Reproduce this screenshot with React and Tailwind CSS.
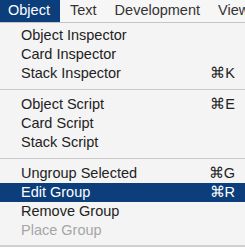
function Item({ label, shortcut, active, disabled }) {
  return (
    <div
      className={`flex h-[19px] items-center justify-between pl-[21px] pr-[10px] text-[14.5px] ${
        active ? 'bg-[#0b3e7b] text-white' : disabled ? 'text-[#a6a6a6]' : 'text-[#222222]'
      }`}
    >
      <span>{label}</span>
      {shortcut && <span>{shortcut}</span>}
    </div>
  )
}

function Separator() {
  return (
    <div className="flex h-[12px] items-center">
      <div className="h-px w-full bg-[#c9c9c9]" />
    </div>
  )
}

export default function App() {
  return (
    <div className="flex h-[249px] w-[245px] flex-col overflow-hidden bg-white font-['Liberation_Sans',Arial,sans-serif]">
      {/* menu bar */}
      <div className="flex h-[22px] shrink-0 items-center overflow-hidden whitespace-nowrap bg-[#f6f6f6] text-[14.5px] text-[#333333]">
        <div className="flex h-full w-[60px] shrink-0 items-center bg-[#0b3e7b] pl-[8px] text-white">Object</div>
        <div className="shrink-0 pl-[10px] pr-[9px]">Text</div>
        <div className="shrink-0 px-[9px]">Development</div>
        <div className="shrink-0 px-[9px]">View</div>
      </div>
      <div className="h-px shrink-0 bg-[#c4c4c4]" />

      {/* dropdown */}
      <div className="flex flex-col bg-[#f4f4f4] pb-[5px] pt-[3px]">
        <Item label="Object Inspector" />
        <Item label="Card Inspector" />
        <Item label="Stack Inspector" shortcut="⌘K" />
        <Separator />
        <Item label="Object Script" shortcut="⌘E" />
        <Item label="Card Script" />
        <Item label="Stack Script" />
        <Separator />
        <Item label="Ungroup Selected" shortcut="⌘G" />
        <Item label="Edit Group" shortcut="⌘R" active />
        <Item label="Remove Group" />
        <Item label="Place Group" disabled />
      </div>
      <div className="h-[2px] shrink-0 bg-[#cfcfcf]" />
    </div>
  )
}
